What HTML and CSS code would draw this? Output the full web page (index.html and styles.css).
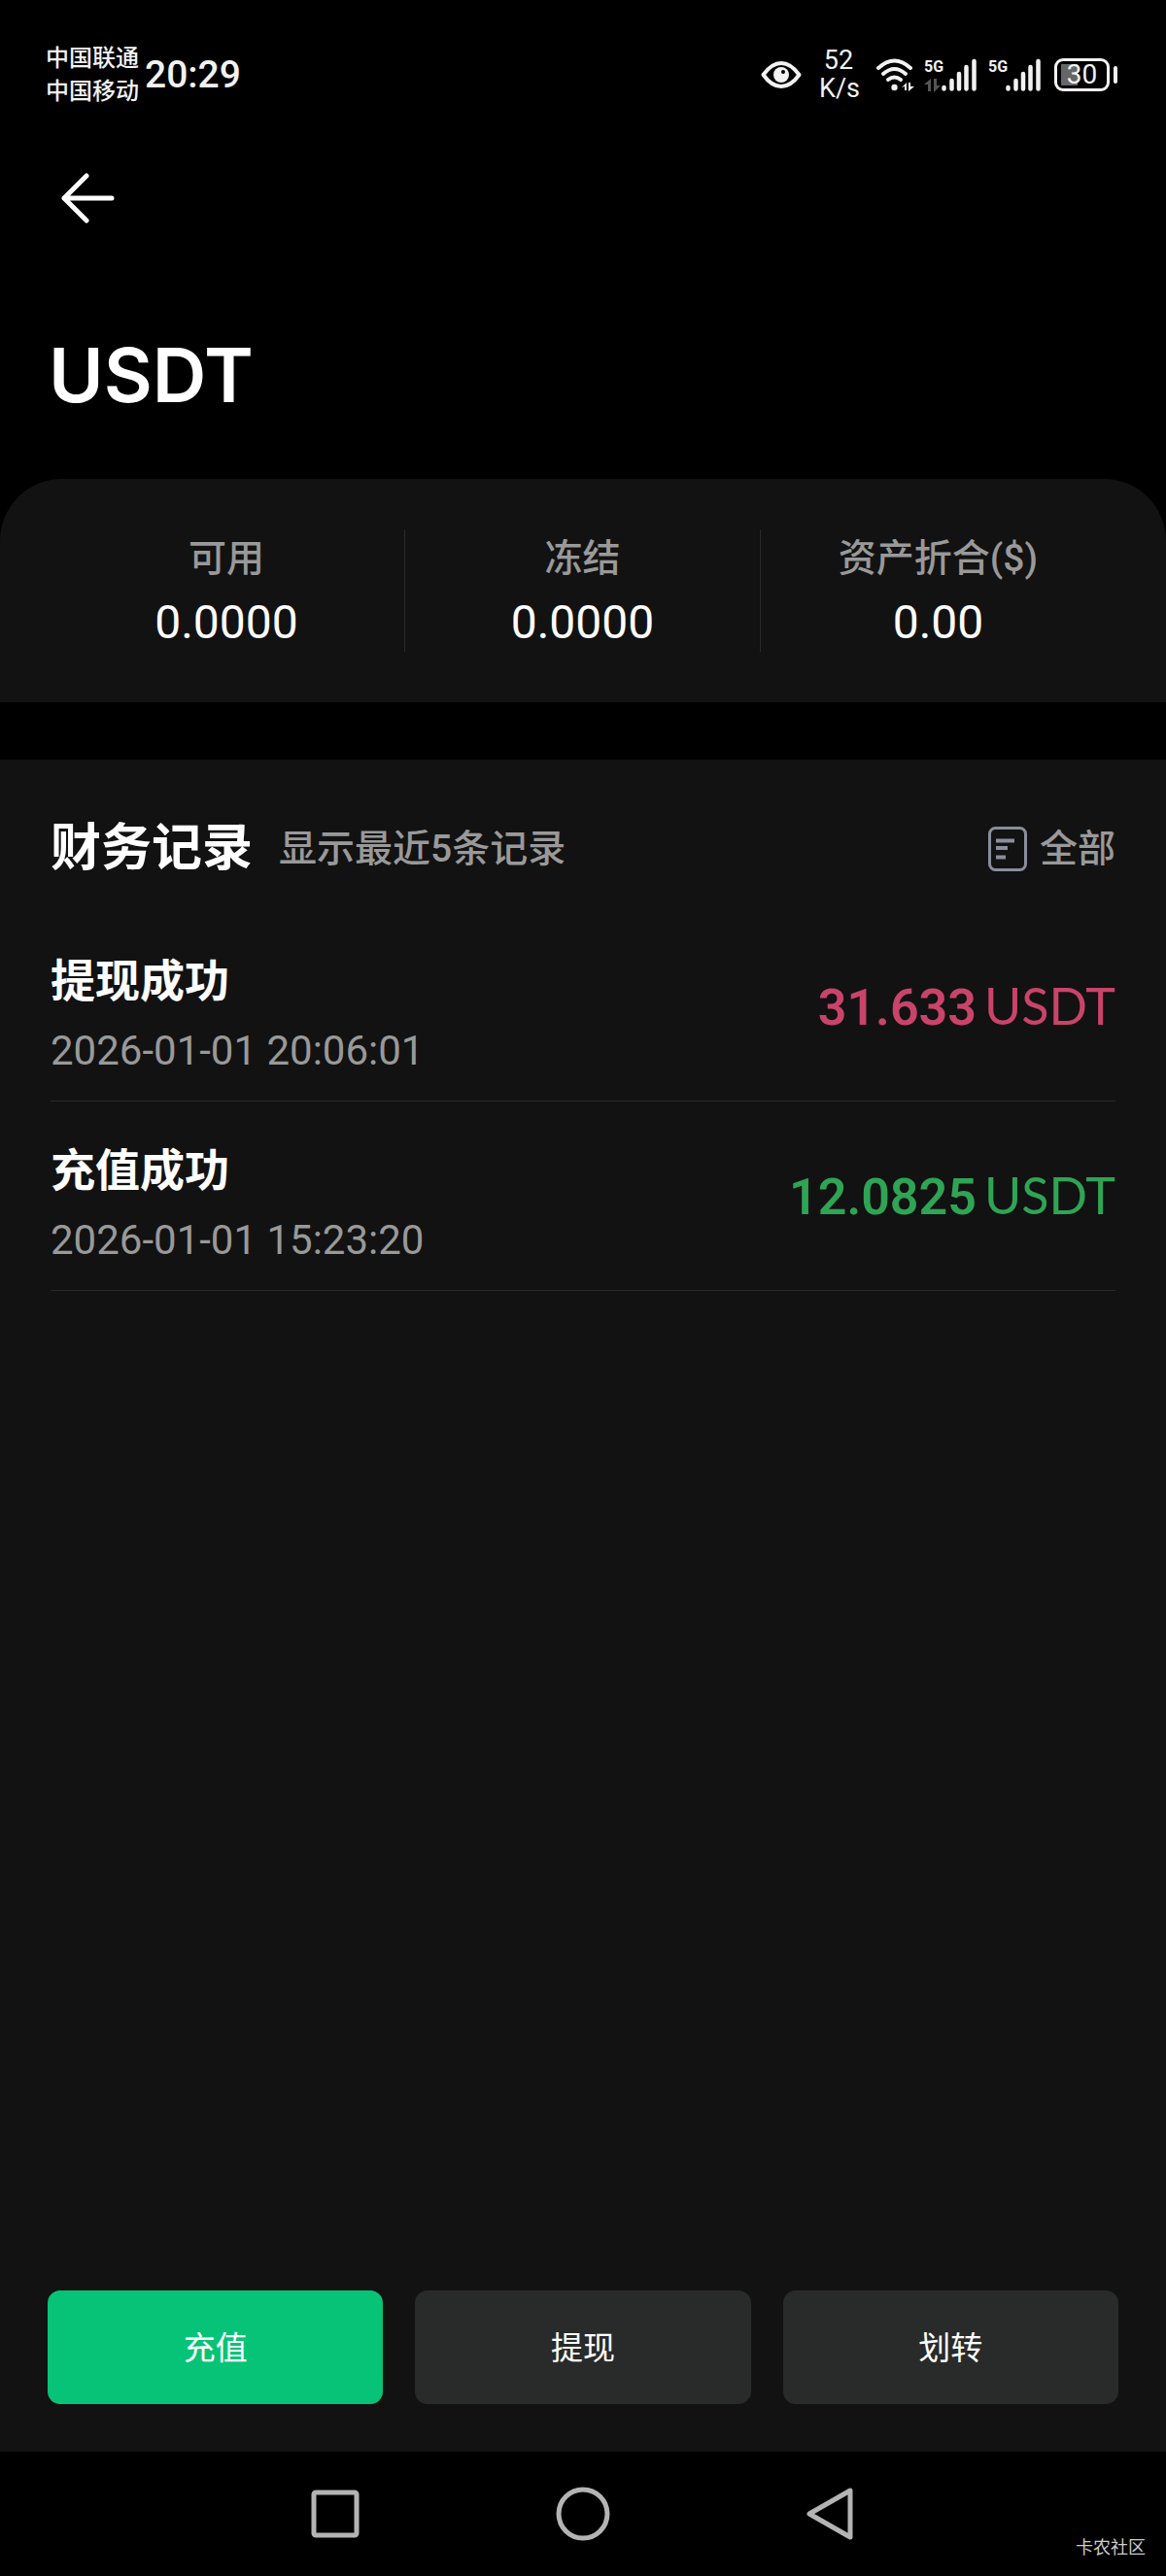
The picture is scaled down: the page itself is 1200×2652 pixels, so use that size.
FILE: index.html
```html
<!DOCTYPE html>
<html lang="zh-CN">

<head>
    <meta charset="utf-8">
    <meta name="viewport" content="width=device-width, initial-scale=1.0">
    <title>USDT</title>
    <link rel="stylesheet" href="styles.css">
</head>

<body>
    <div class="statusbar">
        <div class="carriers">
            <p>中国联通</p>
            <p>中国移动</p>
        </div>
        <p class="time">20:29</p>

        <div class="status-icons">
            <svg class="eye" width="42" height="28" viewBox="0 0 42 28">
                <path d="M2.500 14 C9 5 15 2 21 2 S33 5 39.500 14 C33 23 27 26 21 26 S9 23 2.500 14 Z" fill="none" stroke="#f2f2f2" stroke-width="4" stroke-linejoin="round" />
                <circle cx="21" cy="14" r="8" fill="#f2f2f2" />
                <circle cx="23" cy="11" r="2" fill="#000" />
            </svg>
            <div class="speed">
                <p>52</p>
                <p>K/s</p>
            </div>
            <svg class="wifi" width="42" height="34" viewBox="0 0 42 34">
                <g fill="none" stroke="#f2f2f2" stroke-width="4" stroke-linecap="round">
                    <path d="M3 10 Q19.500 -5 36 10" />
                    <path d="M8 16 Q19.500 6 31 16" />
                    <path d="M13 22 Q19.500 17 26 22" />
                </g>
                <circle cx="19.500" cy="30" r="3.200" fill="#f2f2f2" />
                <path d="M27 30 L32 25 V33 H30 V29 Z M34 25 H36 V29 H40 L34 34 Z" fill="#f2f2f2" />
            </svg>
            <div class="signal">
                <div class="network">
                    <span>5G</span>
                    <svg width="17" height="14" viewBox="0 0 17 14">
                        <path d="M0 6 L7 0 V13 H4 V6 Z M10 0 H13 V7 H17 L10 14 Z" fill="#555" />
                    </svg>
                </div>
                <svg width="36" height="34" viewBox="0 0 36 34">
                    <path d="M2.500 30 V31.500 M10.500 23 V31.500 M18 16 V31.500 M25.500 9 V31.500 M33.500 3 V31.500" stroke="#f2f2f2" stroke-width="4.500" stroke-linecap="round" />
                </svg>
            </div>
            <div class="signal">
                <div class="network"><span>5G</span></div>
                <svg width="36" height="34" viewBox="0 0 36 34">
                    <path d="M2.500 30 V31.500 M10.500 23 V31.500 M18 16 V31.500 M25.500 9 V31.500 M33.500 3 V31.500" stroke="#f2f2f2" stroke-width="4.500" stroke-linecap="round" />
                </svg>
            </div>
            <div class="battery"><span>30</span></div>
        </div>
    </div>

    <header>
        <button class="back" aria-label="返回">
            <svg width="56" height="52" viewBox="0 0 56 52">
                <path d="M26 3 L3 26 L26 49 M3 26 H52" fill="none" stroke="#fff" stroke-width="5" stroke-linecap="round" stroke-linejoin="round" />
            </svg>
        </button>
        <h1>USDT</h1>
    </header>

    <section class="balance">
        <div class="balance-item">
            <h3>可用</h3>
            <p>0.0000</p>
        </div>
        <div class="balance-item">
            <h3>冻结</h3>
            <p>0.0000</p>
        </div>
        <div class="balance-item">
            <h3>资产折合($)</h3>
            <p>0.00</p>
        </div>
    </section>

    <main>
        <div class="records-head">
            <h2>财务记录</h2>
            <p>显示最近5条记录</p>
            <a href="#">
                <svg width="40" height="46" viewBox="0 0 40 46">
                    <rect x="1.500" y="1.500" width="37" height="43" rx="6" fill="none" stroke="#8a8d9c" stroke-width="3" />
                    <path d="M8 14.500 H27 M8 22 H20 M8 31.500 H18" stroke="#8a8d9c" stroke-width="4" />
                </svg>
                全部
            </a>
        </div>

        <article class="record">
            <div>
                <h3>提现成功</h3>
                <time>2026-01-01 20:06:01</time>
            </div>
            <p class="amount out">31.633<span>USDT</span></p>
        </article>
        <article class="record">
            <div>
                <h3>充值成功</h3>
                <time>2026-01-01 15:23:20</time>
            </div>
            <p class="amount in">12.0825<span>USDT</span></p>
        </article>

        <div class="actions">
            <button class="primary">充值</button>
            <button>提现</button>
            <button>划转</button>
        </div>
    </main>

    <footer>
        <button aria-label="最近任务">
            <svg width="56" height="56" viewBox="0 0 56 56">
                <rect x="6" y="6" width="44" height="44" rx="2" />
            </svg>
        </button>
        <button aria-label="主屏幕">
            <svg width="56" height="56" viewBox="0 0 56 56">
                <circle cx="28" cy="28" r="25" />
            </svg>
        </button>
        <button aria-label="返回上一级">
            <svg width="56" height="56" viewBox="0 0 56 56">
                <path d="M48 4 V52 L6 28 Z" />
            </svg>
        </button>
        <span class="watermark">卡农社区</span>
    </footer>
</body>

</html>
```

FILE: styles.css
```css
* {
    margin: 0;
    padding: 0;
    box-sizing: border-box;
}

body {
    min-height: 100vh;
    display: flex;
    flex-direction: column;
    background: #000;
    color: #fff;
    font-family: Roboto, "Noto Sans CJK SC", sans-serif;
}

svg {
    display: block;
}

button {
    border: 0;
    background: none;
    color: inherit;
    font-family: inherit;
}

/* status bar */
.statusbar {
    display: flex;
    align-items: center;
    padding: 43px 51px 0 47px;
    color: #f2f2f2;
}

.carriers {
    font-size: 24px;
    line-height: 34px;
    font-weight: 500;
}

.time {
    margin-left: 6px;
    font-size: 39px;
    font-weight: 500;
}

.status-icons {
    display: flex;
    align-items: center;
    margin-left: auto;
}

.speed {
    width: 40px;
    margin: 0 18px;
    font-size: 27px;
    line-height: 29px;
    text-align: center;
}

.signal {
    display: flex;
    margin-left: 8px;
}

.signal + .signal {
    margin-left: 12px;
}

.network {
    width: 18px;
    font-size: 16px;
    line-height: 18px;
    font-weight: 700;
}

.network svg {
    margin-top: 3px;
}

.battery {
    position: relative;
    width: 57px;
    height: 34px;
    margin-left: 14px;
    margin-right: 7px;
    border: 3px solid #f2f2f2;
    border-radius: 9px;
    background: linear-gradient(90deg, #666 17px, transparent 17px) no-repeat 4px 3px / 40px 22px;
    font-size: 28px;
    line-height: 28px;
    text-align: center;
}

.battery::after {
    content: "";
    position: absolute;
    right: -11px;
    top: 5px;
    width: 4px;
    height: 18px;
    border-radius: 2px;
    background: #f2f2f2;
}

/* title */
header {
    padding: 67px 50px 55px;
}

.back {
    display: block;
    padding-left: 13px;
}

h1 {
    margin-top: 104px;
    font-family: Inter, sans-serif;
    font-size: 77px;
    line-height: 104px;
    font-weight: 600;
}

.balance {
    display: grid;
    grid-template-columns: repeat(3, 1fr);
    padding: 52px 52px 52px 50px;
    background: #121212;
    border-radius: 64px 64px 0 0;
}

.balance-item {
    height: 126px;
    text-align: center;
}

.balance-item + .balance-item {
    border-left: 1px solid #2a2a2a;
}

.balance-item h3 {
    font-size: 39px;
    line-height: 60px;
    font-weight: 500;
    color: #999;
}

.balance-item p {
    font-size: 48px;
    line-height: 72px;
}

/* records */
main {
    flex: 1;
    display: flex;
    flex-direction: column;
    margin-top: 59px;
    padding: 45px 52px 49px;
    background: #121212;
}

.records-head {
    display: flex;
    align-items: center;
    height: 94px;
    margin-bottom: 18px;
    font-size: 39px;
    line-height: 58px;
    font-weight: 500;
    color: #999;
}

.records-head h2 {
    margin-right: 27px;
    font-size: 52px;
    font-weight: 700;
    color: #fff;
}

.records-head a {
    display: flex;
    align-items: center;
    gap: 13px;
    margin-left: auto;
    color: #999;
    text-decoration: none;
}

.record {
    display: flex;
    align-items: center;
    justify-content: space-between;
    padding: 29px 0;
    border-bottom: 1px solid #2a2a2a;
}

.record h3 {
    font-size: 46px;
    line-height: 84px;
    font-weight: 700;
}

.record time {
    display: block;
    margin-top: 8px;
    font-size: 42px;
    line-height: 44px;
    color: #999;
}

.amount {
    font-size: 52px;
    font-weight: 600;
}

.amount span {
    margin-left: 8px;
    font-family: Lato, sans-serif;
    font-weight: 400;
}

.out {
    color: #c9446a;
}

.in {
    color: #2fa455;
}

.actions {
    display: grid;
    grid-template-columns: repeat(3, 1fr);
    gap: 33px;
    margin: auto -3px 0;
}

.actions button {
    height: 117px;
    padding-bottom: 3px;
    border-radius: 13px;
    background: #292a2a;
    font-size: 33px;
}

.actions .primary {
    background: #06c377;
}

/* system navigation */
footer {
    position: relative;
    display: flex;
    justify-content: center;
    gap: 199px;
    padding: 36px 0;
}

footer svg {
    fill: none;
    stroke: #b4b4b4;
    stroke-width: 5;
    stroke-linejoin: round;
}

.watermark {
    position: absolute;
    right: 21px;
    bottom: 18px;
    font-size: 18px;
    color: #ccc;
}
```
